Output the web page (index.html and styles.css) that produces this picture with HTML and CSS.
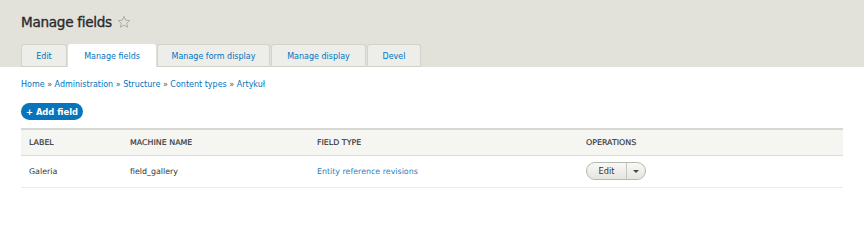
FILE: index.html
```html
<!DOCTYPE html>
<html>
<head>
<meta charset="utf-8">
<link rel="stylesheet" href="styles.css">
</head>
<body>
<header class="head">
  <div class="title-row">
    <h1 class="title">Manage fields</h1>
    <svg class="star" width="14" height="14" viewBox="0 0 24 24"><path d="M12 2.5l2.9 6.3 6.9.7-5.2 4.6 1.5 6.8L12 17.4l-6.1 3.5 1.5-6.8-5.2-4.6 6.9-.7z" fill="none" stroke="#9c9c96" stroke-width="1.3" stroke-linejoin="round"/></svg>
  </div>
  <nav class="tabs">
    <a class="tab w-edit">Edit</a>
    <a class="tab active w-fields">Manage fields</a>
    <a class="tab w-form">Manage form display</a>
    <a class="tab w-display">Manage display</a>
    <a class="tab w-devel">Devel</a>
  </nav>
</header>
<main class="content">
  <div class="crumbs"><a>Home</a> » <a>Administration</a> » <a>Structure</a> » <a>Content types</a> » <a>Artykuł</a></div>
  <a class="add-btn">+ Add field</a>
  <table class="fields">
    <thead>
      <tr><th class="c1">LABEL</th><th class="c2">MACHINE NAME</th><th class="c3">FIELD TYPE</th><th class="c4">OPERATIONS</th></tr>
    </thead>
    <tbody>
      <tr>
        <td>Galeria</td>
        <td>field_gallery</td>
        <td><a class="link">Entity reference revisions</a></td>
        <td>
          <div class="dropbutton">
            <span class="db-main">Edit</span><span class="db-toggle"><span class="caret"></span></span>
          </div>
        </td>
      </tr>
    </tbody>
  </table>
</main>
</body>
</html>
```
FILE: styles.css
```css
html, body { margin: 0; padding: 0; background: #fff; }
body { font-family: "DejaVu Sans", "Liberation Sans", sans-serif; color: #333; width: 864px; height: 206px; overflow: hidden; }
a { text-decoration: none; color: #0074bd; }

.head { background: #e2e1da; padding: 0 0 0 21px; height: 67px; box-sizing: border-box; display: flex; flex-direction: column; }
.title-row { display: flex; align-items: center; height: 44px; box-sizing: border-box; }
.title { margin: 0; font-size: 13.6px; font-weight: normal; color: #2a2a2a; letter-spacing: -0.3px; -webkit-text-stroke: 0.35px #2a2a2a; }
.star { margin-left: 5px; margin-top: -1px; }

.tabs { display: flex; height: 23px; }
.tab { display: flex; align-items: center; justify-content: center; font-size: 8px; color: #0074bd; background: #ededea; border: 1px solid #d3d2cb; border-bottom: none; border-radius: 3px 3px 0 0; box-sizing: border-box; margin-right: 1px; box-shadow: inset 0 -1px 0 #d0cfc8; }
.tab.active { background: #fff; box-shadow: none; border-color: #fff; }
.w-edit { width: 46px; }
.w-fields { width: 88px; }
.w-form { width: 113px; }
.w-display { width: 95px; }
.w-devel { width: 54px; }

.content { padding: 0 21px; }
.crumbs { font-size: 8px; color: #555; margin-top: 12px; height: 11px; line-height: 11px; }
.crumbs a { color: #0074bd; }

.add-btn { display: inline-flex; align-items: center; justify-content: center; margin-top: 13px; width: 62px; height: 17px; border-radius: 9px; background: #0874bb; color: #fff; font-weight: bold; font-size: 8.4px; }

.fields { border-collapse: collapse; width: 822px; margin-top: 8px; font-size: 7.9px; }
.fields th { text-align: left; font-weight: normal; color: #333; background: #f5f5f2; height: 26px; padding: 0 8px; border-top: 2px solid #d8d8d3; border-bottom: 1px solid #dcdcd7; box-sizing: border-box; -webkit-text-stroke: 0.15px #333; }
.fields td { height: 31px; padding: 0 8px; border-bottom: 1px solid #ebebe7; color: #333; }
.c1 { width: 101px; }
.c2 { width: 187px; }
.c3 { width: 269px; }
.c4 { width: 265px; }
.link { color: #2b7fc0; }

.dropbutton { display: inline-flex; height: 18px; border: 1px solid #b8b8b2; border-radius: 10px; background: linear-gradient(#f8f8f5, #e6e5e0); box-sizing: border-box; overflow: hidden; vertical-align: middle; }
.db-main { width: 39px; display: flex; align-items: center; justify-content: center; color: #333; border-right: 1px solid #c6c6c0; font-size: 8.2px; }
.db-toggle { width: 18px; display: flex; align-items: center; justify-content: center; }
.caret { width: 0; height: 0; border-left: 3px solid transparent; border-right: 3px solid transparent; border-top: 3px solid #444; }
```
